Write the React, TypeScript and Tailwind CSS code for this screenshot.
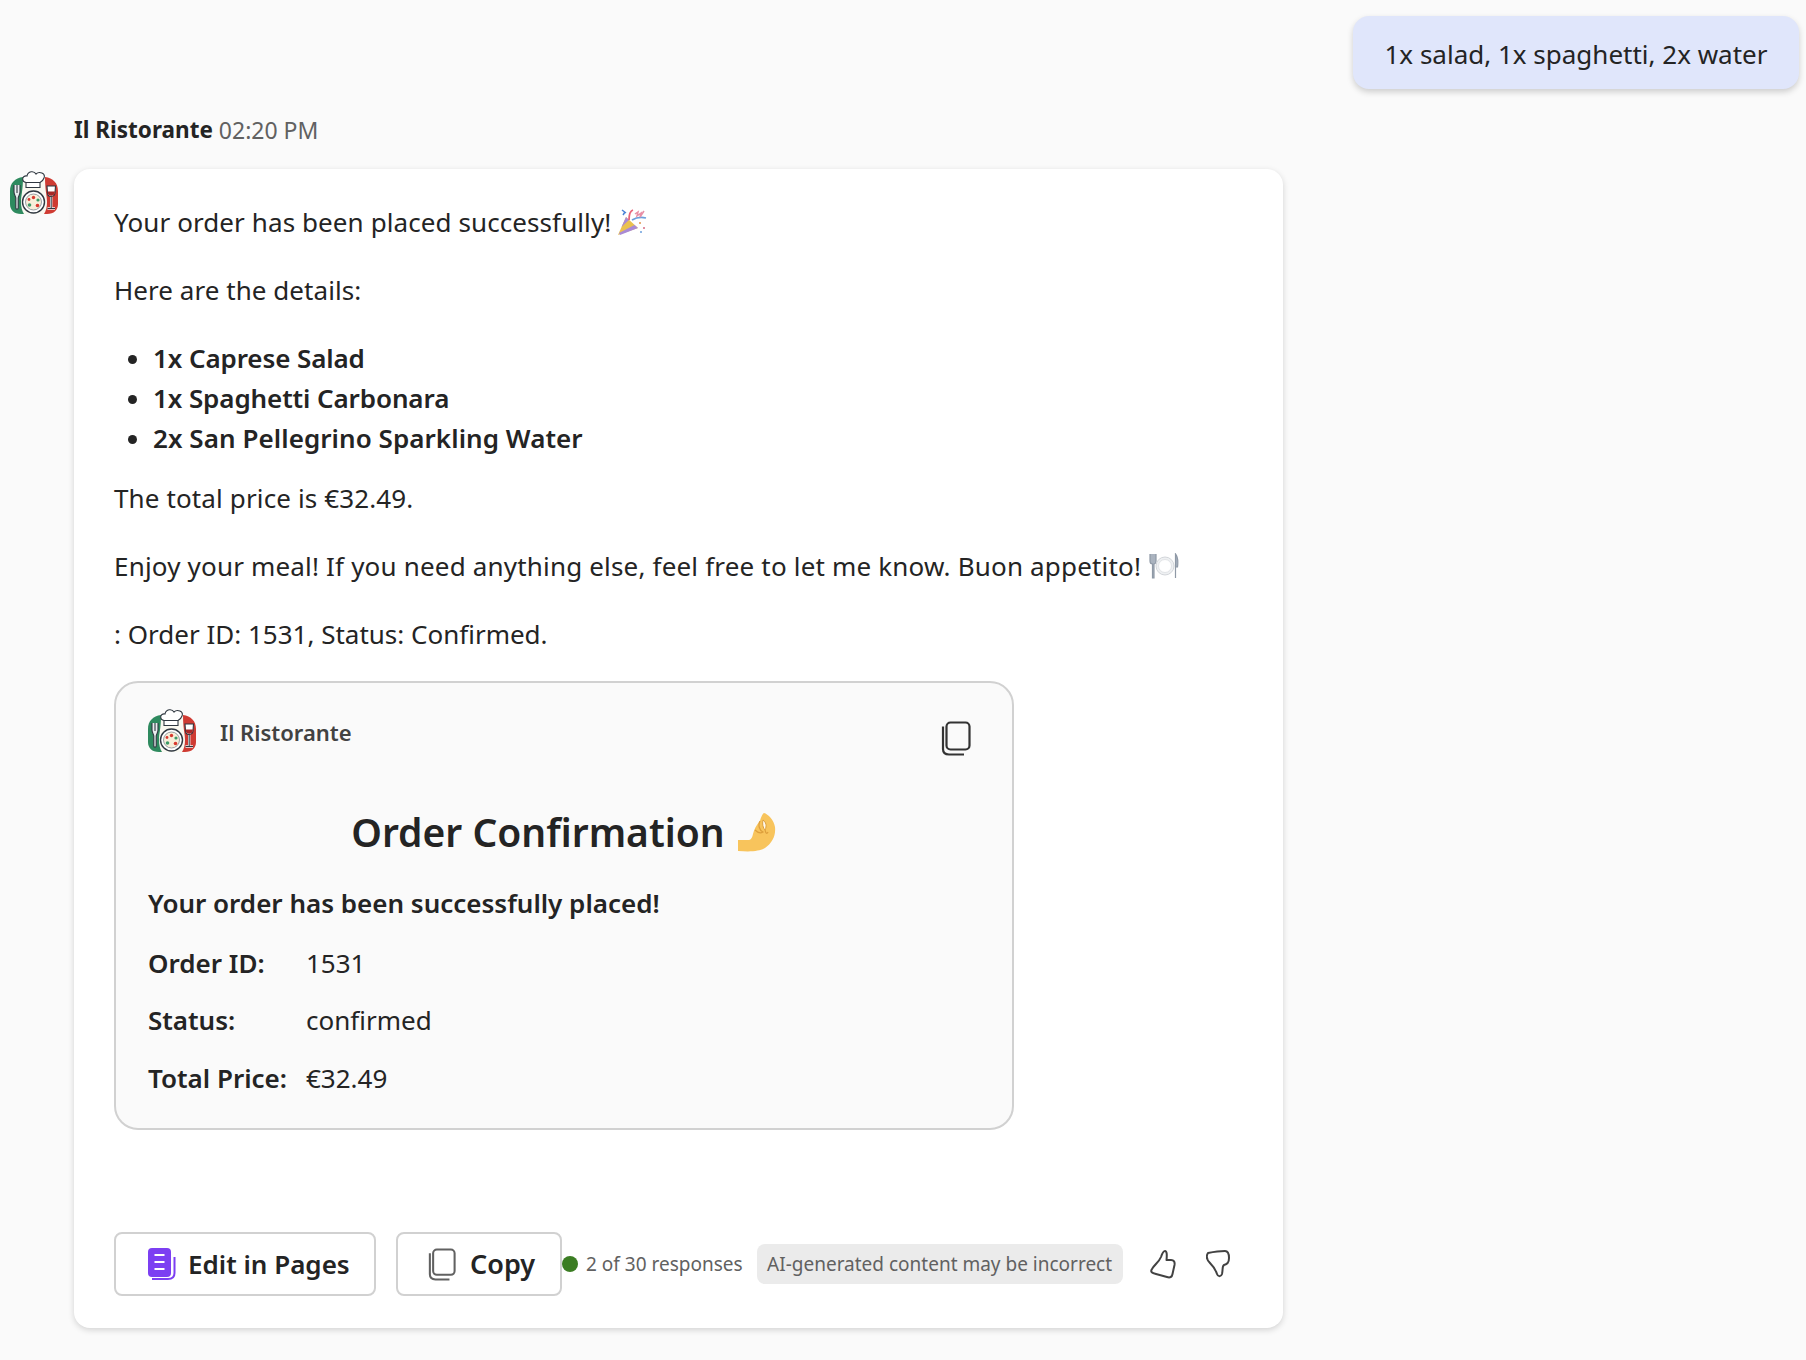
import React from "react";

function Logo({ className }: { className: string }) {
  return (
    <svg viewBox="0 0 48 43" className={className}>
      <path d="M0 33V20C0 12 6 7 14 6H34C42 7 48 12 48 20V33C48 39 44 43 37 43H11C4 43 0 39 0 33Z" fill="#f9f8f0" />
      <path d="M13 6C5 7 0 12 0 20V33C0 39 4 43 11 43H14C12 40 11 36 11 31C11 24 13 20 13 6Z" fill="#2e8a5f" />
      <path d="M35 6C43 7 48 12 48 20V33C48 39 44 43 37 43H34C36 40 37 36 37 31C37 24 35 20 35 6Z" fill="#cf3b33" />
      <path d="M16 11V16.500H30V11Z" fill="#fff" stroke="#2f3740" strokeWidth="1.100" />
      <path d="M16 11.500C11 10.500 12 4 17 5C18 0 24 -0.500 26 3C29 0 36 2 34 7C33 10 31 11 30 11.500Z" fill="#fff" stroke="#2f3740" strokeWidth="1.100" />
      <circle cx="23.500" cy="31" r="11" fill="#fff" stroke="#2f3740" strokeWidth="1.400" />
      <circle cx="23.500" cy="31" r="8" fill="#f7eeda" stroke="#7f8890" strokeWidth="0.800" />
      <circle cx="23.500" cy="26.500" r="1.700" fill="#d8392f" />
      <circle cx="28" cy="29" r="1.600" fill="#3c9a68" />
      <circle cx="27.500" cy="34.500" r="1.800" fill="#d8392f" />
      <circle cx="19.500" cy="34" r="1.800" fill="#3c9a68" />
      <circle cx="19" cy="28.500" r="1.400" fill="#d8392f" />
      <path d="M4 14V21C4 24 5.800 25 5.800 27V37C5.800 38.500 8.200 38.500 8.200 37V27C8.200 25 10 24 10 21V14M7 14V22" fill="#e9edef" stroke="#2f3740" strokeWidth="1.100" />
      <path d="M37 15H45.500L45 22C44.500 26.500 37.500 26.500 37.500 22Z" fill="#fff" stroke="#2f3740" strokeWidth="1.100" />
      <path d="M37.600 20.500H45L44.700 22.500C44 25.500 38.500 25.500 37.800 22.500Z" fill="#a82828" />
      <path d="M41.200 26V37M37.500 37.500H45" stroke="#eef0f2" strokeWidth="2.400" fill="none" />
      <path d="M41.200 26V37M37.500 37.500H45" stroke="#2f3740" strokeWidth="1" fill="none" />
    </svg>
  );
}

function CopyIcon({ className, stroke }: { className: string; stroke: string }) {
  return (
    <svg viewBox="0 0 30 35" fill="none" className={className} stroke={stroke} strokeWidth="2.200">
      <rect x="5.500" y="1.500" width="23" height="27" rx="4" />
      <path d="M2 5.500V28C2 31.500 4.500 33.500 8 33.500H23" />
    </svg>
  );
}

function Party() {
  return (
    <svg viewBox="0 0 30 28" className="ml-[6px] h-[28px] w-[30px] shrink-0">
      <path d="M1 27L9 9L21 20Z" fill="#eac14e" />
      <path d="M4.500 19L12 12L9 9ZM2 25L17.500 17L21 20L3 27Z" fill="#a98ad6" />
      <path d="M12 12C12 6 13 3 16 2" fill="none" stroke="#e8647a" strokeWidth="1.800" />
      <path d="M15 12C20 9 25 9 29 10" fill="none" stroke="#6b9fdc" strokeWidth="1.800" />
      <path d="M18 6L21 4L20 8L24 5L23 9L27 3" fill="none" stroke="#e88fa6" strokeWidth="1.500" />
      <path d="M5 2L9 5M6 7L8 4" stroke="#4a83d6" strokeWidth="1.500" />
      <circle cx="23" cy="15" r="1" fill="#e0954d" />
      <circle cx="27" cy="20" r="1" fill="#d76b82" />
      <circle cx="24" cy="24" r="1" fill="#6b9fdc" />
    </svg>
  );
}

function Plate() {
  return (
    <svg viewBox="0 0 30 26" className="ml-[8px] h-[26px] w-[30px] shrink-0">
      <path d="M1 1V8C1 10 2 11 3.500 11V25H5V11C6 11 7 10 7 8V1" fill="#aab3bf" stroke="#8f99a6" strokeWidth="1.200" />
      <circle cx="16" cy="13" r="9" fill="#eef0f2" stroke="#d3d6da" strokeWidth="1" />
      <circle cx="16" cy="13" r="6.500" fill="#fff" stroke="#e2e4e7" strokeWidth="1" />
      <path d="M26.500 25V1C29 4 29 10 28.500 14H26.500" fill="#a4aebb" stroke="#8f99a6" strokeWidth="1.200" />
    </svg>
  );
}

function Pinch() {
  return (
    <svg viewBox="0 0 40 40" className="ml-[12px] h-[40px] w-[40px] shrink-0">
      <path d="M1 39V28H11C14 28 15 26 16 22C18 15 21 11 23 9C24 5 26 1 27 1C31 2 37 8 38 15C39 24 35 31 28 36C23 39 16 40 1 39Z" fill="#f8c45c" />
      <path d="M26 8C29 10 30 14 28 18C26 16 25 12 26 8Z" fill="#fffaf0" stroke="#dd9f3c" strokeWidth="1" />
      <path d="M23 9C21 13 22 18 26 20C23 22 20 20 18 18M28 18C29 22 30 22 31 20" fill="none" stroke="#dd9f3c" strokeWidth="1.200" />
    </svg>
  );
}

function Row({ label, value }: { label: string; value: string }) {
  return (
    <div className="flex h-[57.500px] items-center">
      <span className="w-[158px] font-semibold">{label}</span>
      <span>{value}</span>
    </div>
  );
}

export default function App() {
  return (
    <div className="h-[1360px] overflow-hidden bg-[#fafafa] text-[26px] leading-[40px] text-[#242424] [font-family:'Noto_Sans',sans-serif]">
      <div className="flex justify-end pt-[16px] pr-[7px]">
        <div className="flex h-[73px] w-[446px] items-center justify-center rounded-[16px] bg-[#e0e6fb] pt-[2px] shadow-[0_3px_6px_rgba(0,0,0,0.18)]">
          1x salad, 1x spaghetti, 2x water
        </div>
      </div>
      <div className="mt-[21px] ml-[74px] flex h-[40px] items-center gap-[6px] text-[23px]">
        <span className="text-[22.500px] font-bold">Il Ristorante</span>
        <span className="text-[#616161]">02:20 PM</span>
      </div>
      <div className="mt-[19px] flex items-start pl-[10px]">
        <Logo className="mt-[2px] h-[43px] w-[48px]" />
        <div className="ml-[16px] flex h-[1159px] w-[1209px] flex-col rounded-[16px] bg-white pt-[33px] pr-[40px] pl-[40px] shadow-[0_2px_6px_rgba(0,0,0,0.16)]">
          <div className="flex h-[40px] items-center tracking-[0.09px]">
            Your order has been placed successfully! <Party />
          </div>
          <div className="mt-[28px] tracking-[0.05px]">Here are the details:</div>
          <ul className="mt-[28px] list-disc pl-[39px] font-semibold">
            <li className="tracking-[-0.1px]">1x Caprese Salad</li>
            <li className="tracking-[-0.1px]">1x Spaghetti Carbonara</li>
            <li className="tracking-[0.06px]">2x San Pellegrino Sparkling Water</li>
          </ul>
          <div className="mt-[20px] tracking-[0.13px]">The total price is €32.49.</div>
          <div className="mt-[28px] flex h-[40px] items-center tracking-[0.18px]">
            Enjoy your meal! If you need anything else, feel free to let me know. Buon appetito! <Plate />
          </div>
          <div className="mt-[28px]">: Order ID: 1531, Status: Confirmed.</div>
          <div className="mt-[27px] h-[449px] w-[900px] rounded-[24px] border-2 border-[#d1d1d1] bg-[#fafafa] px-[32px] pt-[25px]">
            <div className="flex items-start justify-between pr-[9px]">
              <div className="flex items-center gap-[24px]">
                <Logo className="h-[43px] w-[48px]" />
                <span className="pt-[4px] text-[22px] font-semibold text-[#424242]">Il Ristorante</span>
              </div>
              <CopyIcon className="mt-[13px] h-[35px] w-[30px]" stroke="#333" />
            </div>
            <div className="mt-[48px] flex h-[56px] items-center justify-center text-[39px] font-semibold">
              Order Confirmation <Pinch />
            </div>
            <div className="mt-[23px] font-semibold">Your order has been successfully placed!</div>
            <div className="mt-[11px]">
              <Row label="Order ID:" value="1531" />
              <Row label="Status:" value="confirmed" />
              <Row label="Total Price:" value="€32.49" />
            </div>
          </div>
          <div className="mt-[102px] flex items-center">
            <div className="flex h-[64px] w-[262px] items-center justify-start gap-[12px] rounded-[8px] border-2 border-[#d1d1d1] pl-[32px] font-semibold">
              <svg viewBox="0 0 28 33" className="h-[33px] w-[28px]">
                <path d="M4 31H20C24 31 26.500 29 26.500 25V9" fill="none" stroke="#7c3ff2" strokeWidth="2" />
                <rect x="0" y="0" width="23" height="29" rx="4" fill="#7c3ff2" />
                <path d="M6.500 7H16.500M6.500 14H16.500M6.500 21H16.500" stroke="#fff" strokeWidth="2" />
              </svg>
              Edit in Pages
            </div>
            <div className="ml-[20px] flex h-[64px] w-[166px] items-center justify-start gap-[14px] rounded-[8px] border-2 border-[#d1d1d1] pl-[30px] text-[27px] font-semibold">
              <CopyIcon className="h-[33px] w-[28px]" stroke="#616161" />
              Copy
            </div>
            <div className="h-[16px] w-[16px] rounded-full bg-[#3b7d23]" />
            <span className="ml-[8px] text-[19px] text-[#616161]">2 of 30 responses</span>
            <div className="ml-[14px] flex h-[40px] w-[366px] items-center justify-center rounded-[8px] bg-[#ebebeb] text-[19px] text-[#616161]">
              AI-generated content may be incorrect
            </div>
            <svg viewBox="0 0 26 30" fill="none" stroke="#424242" strokeWidth="2" strokeLinejoin="round" className="ml-[27px] h-[30px] w-[26px]">
              <path d="M2 20C4 16 9 13 11 8C12 5 13 2 15 2C17 2 17 6 16.500 11H21C24 11 25 13 24.500 16L22.500 25C22 28 20 29 17 28L6 25C2 24 0 23 2 20Z" />
            </svg>
            <svg viewBox="0 0 24 28" fill="none" stroke="#424242" strokeWidth="2" strokeLinejoin="round" className="ml-[30px] h-[28px] w-[24px]">
              <path d="M2 3C7 2 14 1 19 1C22 1 23 4 23 8C23 13 21 14 18 15C16 16 17 20 16 24C15 27 12 27 11 24C10 21 8 17 4 13C1 10 0 6 2 3Z" />
            </svg>
          </div>
        </div>
      </div>
    </div>
  );
}
